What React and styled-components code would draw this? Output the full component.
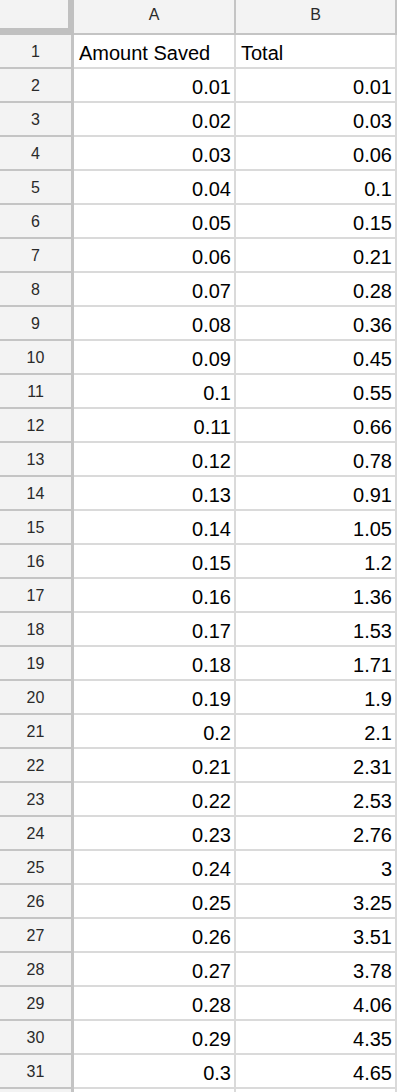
import React from 'react';
import styled, { createGlobalStyle } from 'styled-components';

const GlobalStyle = createGlobalStyle`
  html, body {
    margin: 0;
    padding: 0;
    background: #ffffff;
    overflow: hidden;
  }
  body {
    font-family: "Liberation Sans", Arial, sans-serif;
  }
`;

const Sheet = styled.div`
  display: grid;
  grid-template-columns: 74px 162px 161px;
  width: 398px;
  background: #ffffff;
`;

const Corner = styled.div`
  box-sizing: border-box;
  height: 35px;
  background: #f3f3f3;
  border-right: 6px solid #c0c0c0;
  border-bottom: 7px solid #c0c0c0;
`;

const ColHeader = styled.div`
  box-sizing: border-box;
  height: 35px;
  display: flex;
  align-items: center;
  justify-content: center;
  padding-bottom: 3px;
  background: #f3f3f3;
  border-right: 2px solid #c4c4c4;
  border-bottom: 2px solid #c4c4c4;
  color: #2a2a2a;
  font-size: 16px;
`;

const RowHeader = styled.div`
  box-sizing: border-box;
  height: 34px;
  display: flex;
  align-items: center;
  justify-content: center;
  padding-top: 2px;
  background: #f3f3f3;
  border-right: 3px solid #c4c4c4;
  border-bottom: 2px solid #c4c4c4;
  color: #2a2a2a;
  font-size: 16px;
`;

const Cell = styled.div`
  box-sizing: border-box;
  height: 34px;
  display: flex;
  align-items: flex-end;
  justify-content: ${p => (p.$num ? 'flex-end' : 'flex-start')};
  padding: 0 ${p => (p.$num ? '3px' : '0')} 2px ${p => (p.$num ? '0' : '5px')};
  border-right: 2px solid #dadada;
  border-bottom: 2px solid #dadada;
  color: #000000;
  font-size: 20px;
  line-height: 23px;
  white-space: nowrap;
`;

const fmt = v => String(Number(v.toFixed(2)));

const rows = Array.from({ length: 30 }, (_, i) => {
  const n = i + 1;
  return { saved: fmt(n / 100), total: fmt((n * (n + 1)) / 200) };
});

export default function App() {
  return (
    <>
      <GlobalStyle />
      <Sheet>
        <Corner />
        <ColHeader>A</ColHeader>
        <ColHeader>B</ColHeader>

        <RowHeader>1</RowHeader>
        <Cell>Amount Saved</Cell>
        <Cell>Total</Cell>

        {rows.map((r, i) => (
          <React.Fragment key={i}>
            <RowHeader>{i + 2}</RowHeader>
            <Cell $num>{r.saved}</Cell>
            <Cell $num>{r.total}</Cell>
          </React.Fragment>
        ))}

        <RowHeader />
        <Cell />
        <Cell />
      </Sheet>
    </>
  );
}
